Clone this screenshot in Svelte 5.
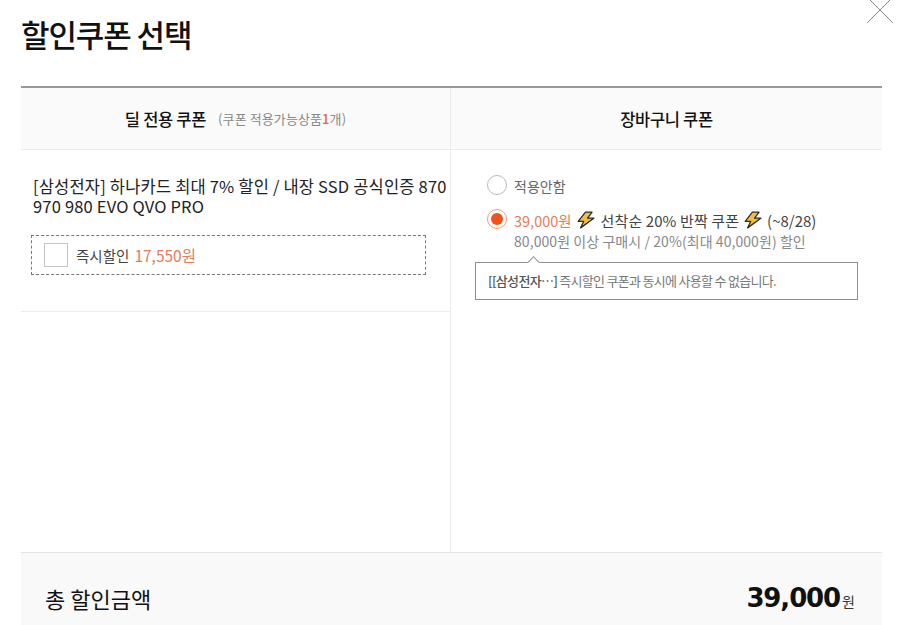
<script>
  const bolt = 'M7.5 1 L1 9.2 L6 9.2 L3.2 15 L15 6.4 L9.4 6.4 L13.4 1 Z';
</script>

<div class="popup">
  <h1>할인쿠폰 선택</h1>
  <button class="close" aria-label="닫기">
    <svg width="28" height="24" viewBox="0 0 28 24"><path d="M1 23 L27 -3 M1 -3 L27 23" stroke="#8a8a8a" stroke-width="1" fill="none" /></svg>
  </button>

  <div class="table">
    <div class="col left">
      <div class="head">
        <strong>딜 전용 쿠폰</strong>
        <span class="note">(쿠폰 적용가능상품<b>1</b>개)</span>
      </div>
      <div class="deal">
        <p class="deal-name">[삼성전자] 하나카드 최대 7% 할인 / 내장 SSD 공식인증 870 970 980 EVO QVO PRO</p>
        <div class="instant">
          <span class="check"></span>
          <span class="label">즉시할인</span>
          <span class="price">17,550원</span>
        </div>
      </div>
    </div>

    <div class="col right">
      <div class="head"><strong>장바구니 쿠폰</strong></div>
      <div class="options">
        <div class="opt none">
          <span class="radio"></span>
          <span class="label">적용안함</span>
        </div>
        <div class="opt on">
          <span class="radio"><i></i></span>
          <div class="opt-text">
            <div class="line">
              <span class="price">39,000원</span>
              <svg class="bolt" width="18" height="18" viewBox="0 0 16 16"><path d={bolt} fill="#f5bd3f" stroke="#2a2a2a" stroke-width="1.1" stroke-linejoin="round" /></svg>
              <span>선착순 20% 반짝 쿠폰</span>
              <svg class="bolt" width="18" height="18" viewBox="0 0 16 16"><path d={bolt} fill="#f5bd3f" stroke="#2a2a2a" stroke-width="1.1" stroke-linejoin="round" /></svg>
              <span>(~8/28)</span>
            </div>
            <div class="sub">80,000원 이상 구매시 / 20%(최대 40,000원) 할인</div>
          </div>
        </div>
        <div class="tip">
          <b>[[삼성전자…]</b> 즉시할인 쿠폰과 동시에 사용할 수 없습니다.
        </div>
      </div>
    </div>
  </div>

  <div class="total">
    <span class="total-label">총 할인금액</span>
    <span class="total-amount"><b>39,000</b><small>원</small></span>
  </div>
</div>

<style>
  :global(body) {
    margin: 0;
    background: #fff;
  }

  .popup {
    position: relative;
    width: 900px;
    height: 625px;
    overflow: hidden;
    box-sizing: border-box;
    padding: 0 18px 0 21px;
    display: flex;
    flex-direction: column;
    font-family: "Noto Sans CJK KR", "Noto Sans", sans-serif;
    color: #222;
  }

  h1 {
    margin: 0;
    flex: none;
    height: 86px;
    padding-top: 12px;
    box-sizing: border-box;
    font-size: 31px;
    line-height: 44px;
    font-weight: 500;
    letter-spacing: -1.1px;
    color: #111;
  }

  .close {
    position: absolute;
    top: 0;
    left: 866px;
    padding: 0;
    border: 0;
    background: none;
    line-height: 0;
  }

  .table {
    height: 467px;
    box-sizing: border-box;
    flex: none;
    display: flex;
    border-top: 2px solid #999;
    border-bottom: 1px solid #e4e4e4;
  }

  .col.left {
    width: 429px;
    border-right: 1px solid #ececec;
  }

  .col.right {
    flex: 1;
  }

  .head {
    height: 61px;
    background: #fafafa;
    border-bottom: 1px solid #ececec;
    display: flex;
    align-items: center;
    justify-content: center;
    gap: 12px;
    font-size: 16.5px;
    color: #111;
  }

  .head strong {
    font-weight: 500;
    letter-spacing: -0.3px;
  }

  .note {
    font-size: 13px;
    letter-spacing: 0.1px;
    color: #888;
  }

  .note b {
    color: #e8663c;
    font-weight: 500;
  }

  .deal {
    height: 162px;
    padding: 26px 0 0 12px;
    box-sizing: border-box;
    border-bottom: 1px solid #ececec;
  }

  .deal-name {
    margin: 0;
    font-size: 16.5px;
    line-height: 20px;
    letter-spacing: 0.18px;
    color: #222;
  }

  .instant {
    margin: 19px 0 0 -2px;
    width: 395px;
    height: 40px;
    box-sizing: border-box;
    border: 1px dashed #777;
    display: flex;
    align-items: center;
    padding-left: 12px;
    font-size: 14.5px;
  }

  .check {
    width: 22px;
    height: 22px;
    border: 1px solid #c4c4c4;
    margin-right: 8px;
  }

  .instant .label {
    color: #444;
    margin-right: 5px;
  }

  .price {
    color: #e27c5c;
  }

  .instant .price {
    font-size: 15.5px;
  }

  .options {
    padding: 25px 0 0 36px;
    font-size: 15px;
    color: #444;
  }

  .opt {
    display: flex;
    align-items: flex-start;
    gap: 7px;
  }

  .opt.none {
    height: 34px;
    color: #666;
  }

  .opt.none .label {
    font-size: 14px;
    line-height: 22px;
  }

  .radio {
    width: 20px;
    height: 20px;
    box-sizing: border-box;
    border: 1.5px solid #bbb;
    border-radius: 50%;
    display: flex;
    align-items: center;
    justify-content: center;
    flex: none;
  }

  .opt.on .radio {
    border-color: #f09a7c;
  }

  .radio i {
    width: 12px;
    height: 12px;
    border-radius: 50%;
    background: #f4511e;
  }

  .line {
    display: flex;
    align-items: center;
    gap: 5px;
    height: 22px;
    white-space: nowrap;
  }

  .line .price {
    font-size: 14.5px;
  }

  .line span:nth-of-type(2) {
    letter-spacing: 0.1px;
    margin-left: 1px;
  }

  .sub {
    font-size: 14px;
    line-height: 20px;
    letter-spacing: 0.07px;
    color: #888;
    white-space: nowrap;
  }

  .tip {
    position: relative;
    margin: 11px 0 0 -12px;
    width: 383px;
    height: 38px;
    box-sizing: border-box;
    border: 1px solid #8e8e8e;
    padding: 0 12px;
    font-size: 13px;
    line-height: 36px;
    letter-spacing: -0.7px;
    color: #777;
    background: #fff;
    white-space: nowrap;
  }

  .tip b {
    font-weight: 500;
    color: #555;
  }

  .tip::before {
    content: "";
    position: absolute;
    left: 53px;
    top: -5px;
    width: 8px;
    height: 8px;
    background: #fff;
    border-left: 1px solid #8e8e8e;
    border-top: 1px solid #8e8e8e;
    transform: rotate(45deg);
  }

  .total {
    flex: none;
    height: 90px;
    background: #f9f9f9;
    display: flex;
    align-items: center;
    justify-content: space-between;
    padding: 0 27px 0 24px;
  }

  .total-label {
    font-size: 22px;
    color: #111;
  }

  .total-amount b {
    font-family: "DejaVu Sans", sans-serif;
    font-size: 26px;
    font-weight: 700;
    letter-spacing: -1.1px;
    color: #111;
  }

  .total-amount small {
    font-size: 14px;
    color: #333;
    margin-left: 2px;
  }
</style>
